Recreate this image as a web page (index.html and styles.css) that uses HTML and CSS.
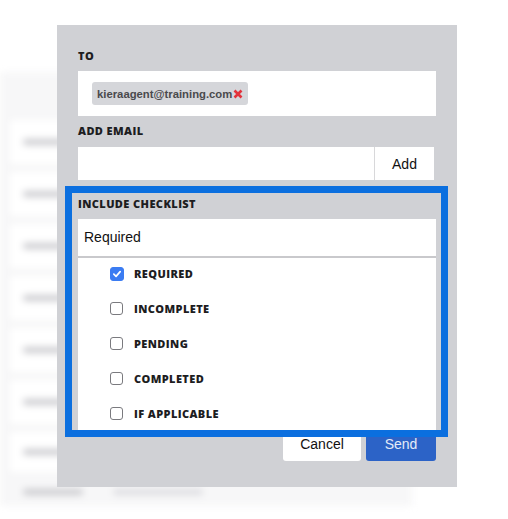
FILE: index.html
```html
<!DOCTYPE html>
<html lang="en">
<head>
    <meta charset="UTF-8" />
    <meta name="viewport" content="width=device-width, initial-scale=1.0" />
    <title>Send checklist</title>
    <link rel="stylesheet" href="styles.css">
</head>
<body>
    <!-- blurred page behind the modal -->
    <div class="page-behind">
        <div class="row"><span class="bar"></span></div>
        <div class="row"><span class="bar"></span></div>
        <div class="row"><span class="bar"></span></div>
        <div class="row"><span class="bar"></span></div>
        <div class="row"><span class="bar"></span></div>
        <div class="row"><span class="bar"></span></div>
        <div class="row short"><span class="bar"></span></div>
        <div class="row last"><span class="bar"></span><span class="bar long"></span></div>
    </div>

    <!-- Send modal -->
    <div class="modal">
        <div class="field-label">TO</div>
        <div class="to-box">
            <span class="tag">kieraagent@training.com<svg class="tag-x" width="10" height="10" viewBox="0 0 10 10"><path d="M1.5 1.5 L8.5 8.5 M8.5 1.5 L1.5 8.5" stroke="#e3323b" stroke-width="2.6" stroke-linecap="butt"/></svg></span>
        </div>

        <div class="field-label">ADD EMAIL</div>
        <div class="add-row">
            <input class="add-input" type="text" />
            <button class="add-btn">Add</button>
        </div>

        <div class="field-label checklist-label">INCLUDE CHECKLIST</div>
        <div class="select-wrap">
            <div class="select-box">Required</div>
            <ul class="dropdown">
                <li><span class="box checked"><svg width="14" height="14" viewBox="0 0 14 14"><path d="M3.3 7.2 L5.9 9.7 L10.7 4.2" fill="none" stroke="#fff" stroke-width="2" stroke-linecap="round" stroke-linejoin="round"/></svg></span>REQUIRED</li>
                <li><span class="box"></span>INCOMPLETE</li>
                <li><span class="box"></span>PENDING</li>
                <li><span class="box"></span>COMPLETED</li>
                <li><span class="box"></span>IF APPLICABLE</li>
            </ul>
        </div>

        <div class="actions">
            <button class="btn cancel">Cancel</button>
            <button class="btn send">Send</button>
        </div>

        <!-- highlight frame drawn over the checklist -->
        <div class="highlight"></div>
    </div>
</body>
</html>
```

FILE: styles.css
```css
/* base */
html, body {
    margin: 0;
    padding: 0;
    background: #fff;
    font-family: "Liberation Sans", Arial, sans-serif;
}
body {
    width: 508px;
    height: 519px;
    overflow: hidden;
    position: relative;
}

/* page behind the modal */
.page-behind {
    margin-top: 72px;
    width: 412px;
    padding: 46px 0 0 0;
    background: #f7f7f8;
    filter: blur(3.5px);
}
.page-behind .row {
    height: 46px;
    margin: 0 0 4px 8px;
    background: #fff;
    border: 1px solid #f0f0f1;
    border-radius: 5px;
    display: flex;
    align-items: center;
    gap: 30px;
    padding-left: 14px;
}
.page-behind .row.short { height: 42px; }
.page-behind .row.last {
    height: 26px;
    margin-bottom: 0;
    background: transparent;
    border-color: transparent;
}
.page-behind .bar {
    display: block;
    width: 60px;
    height: 6px;
    background: #cacace;
    border-radius: 3px;
}
.page-behind .bar.long {
    width: 90px;
    background: #dcdce0;
}

/* modal */
.modal {
    position: absolute;
    top: 25px;
    left: 57px;
    width: 400px;
    height: 462px;
    box-sizing: border-box;
    padding: 23px 21px 26px;
    background: #d0d1d5;
    display: flex;
    flex-direction: column;
}
.field-label {
    font-family: "Open Sans", sans-serif;
    font-weight: 800;
    font-size: 11px;
    letter-spacing: 0.4px;
    line-height: 16px;
    color: #1d1d1f;
    margin-bottom: 7px;
}
.to-box {
    height: 45px;
    background: #fff;
    box-sizing: border-box;
    padding: 11px 14px 0;
    margin-bottom: 7px;
}
.tag {
    display: inline-flex;
    align-items: center;
    height: 23px;
    padding: 0 5px;
    background: #d5d6da;
    border-radius: 3px;
    font-size: 11.3px;
    font-weight: 700;
    color: #4a4a4d;
}
.tag-x { margin-left: 1px; }

.add-row {
    display: flex;
    height: 33px;
    margin-right: 2px;
    margin-top: 1px;
}
.add-input {
    flex: 1;
    border: none;
    border-right: 1px solid #d8d8da;
    margin: 0;
    padding: 0 8px;
    background: #fff;
    outline: none;
}
.add-btn {
    width: 59px;
    border: none;
    background: #fff;
    font-family: "Liberation Sans", Arial, sans-serif;
    font-size: 14px;
    color: #111;
    padding: 0;
}
.checklist-label { margin-top: 16px; }

/* checklist select */
.select-wrap { position: relative; }
.select-box {
    height: 37px;
    background: #fff;
    box-sizing: border-box;
    padding: 0 6px 1px;
    display: flex;
    align-items: center;
    font-size: 14px;
    color: #111;
}
.dropdown {
    position: absolute;
    top: 100%;
    left: 0;
    right: 0;
    height: 174px;
    overflow: hidden;
    margin: 0;
    padding: 0;
    list-style: none;
    background: #fff;
    border-top: 2px solid #c9c9cc;
    z-index: 2;
}
.dropdown li {
    height: 35px;
    display: flex;
    align-items: center;
    padding-left: 32px;
    font-family: "Open Sans", sans-serif;
    font-weight: 800;
    font-size: 11px;
    letter-spacing: 0.4px;
    color: #1d1d1f;
}
.dropdown li:first-child { margin-top: -2px; }
.box {
    width: 13px;
    height: 13px;
    box-sizing: border-box;
    border: 1px solid #7a7a7e;
    border-radius: 3px;
    margin-right: 11px;
    display: flex;
    align-items: center;
    justify-content: center;
}
.box.checked {
    width: 14px;
    height: 14px;
    margin-right: 10px;
    background: #3b7cf2;
    border-color: #3b7cf2;
}

/* actions */
.actions {
    margin-top: auto;
    display: flex;
    justify-content: flex-end;
    gap: 5px;
}
.btn {
    height: 35px;
    border: none;
    border-radius: 3px;
    font-family: "Liberation Sans", Arial, sans-serif;
    font-size: 14px;
    padding: 0;
}
.btn.cancel { width: 78px; background: #fff; color: #111; }
.btn.send { width: 70px; background: #2c63c7; color: #e3ebf8; }

/* annotation frame */
.highlight {
    position: absolute;
    left: 8px;
    top: 161px;
    width: 383px;
    height: 251px;
    box-sizing: border-box;
    border: 7px solid #0b6fdf;
    z-index: 3;
    pointer-events: none;
}
```
